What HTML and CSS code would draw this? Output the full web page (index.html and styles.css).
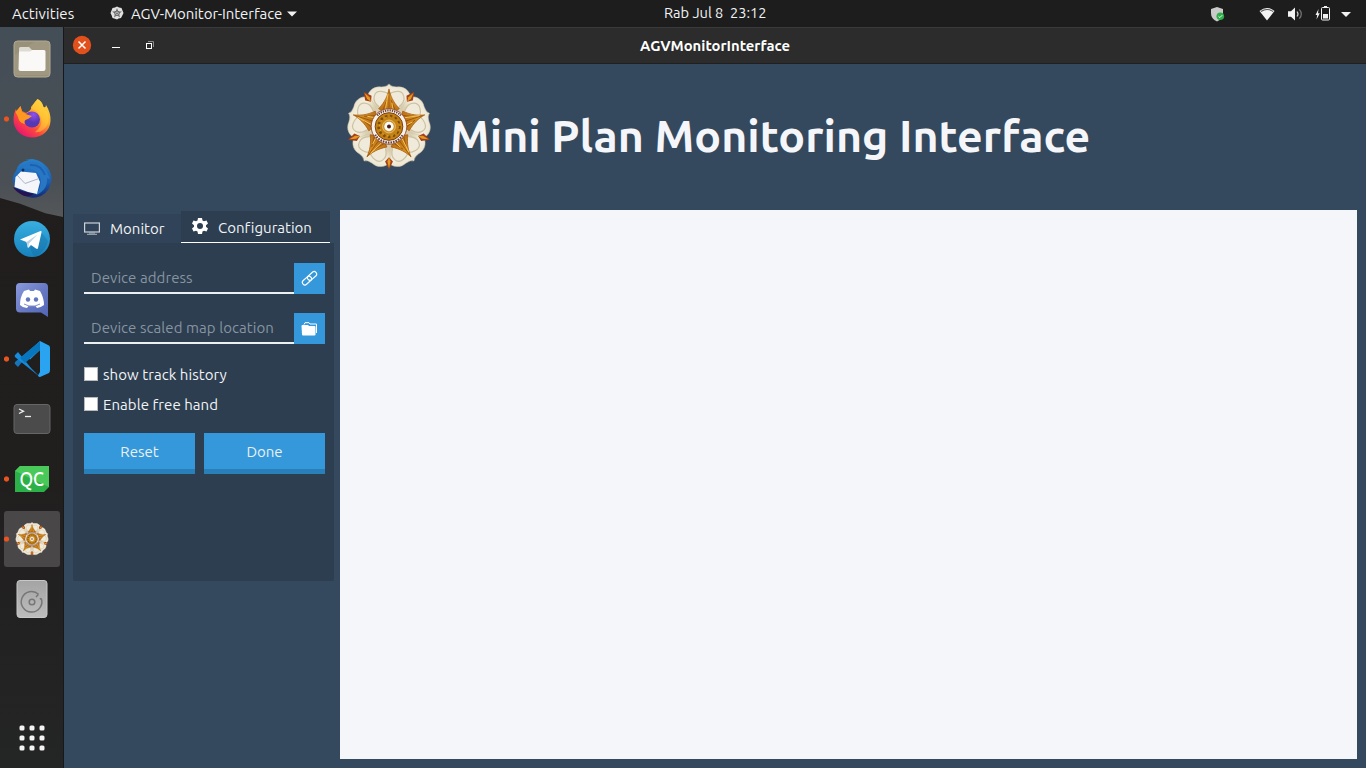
FILE: index.html
```html
<!DOCTYPE html>
<html lang="en">
<head>
<meta charset="utf-8">
<title>AGVMonitorInterface</title>
<link rel="stylesheet" href="styles.css">
</head>
<body>
<svg class="defs" width="0" height="0">
  <defs>
    <linearGradient id="gold" x1="0" y1="0" x2="0" y2="1"><stop offset="0" stop-color="#e8a32a"/><stop offset="1" stop-color="#b0680f"/></linearGradient>
    <radialGradient id="cream" gradientUnits="userSpaceOnUse" cx="0" cy="0" r="43"><stop offset=".55" stop-color="#d9ceb0"/><stop offset=".8" stop-color="#f4efe0"/><stop offset="1" stop-color="#ebe3ce"/></radialGradient>
    <g id="petal">
      <path d="M0 0-22-28C-22-34-17-41-8-40Q-2-40 0-43Q2-40 8-40C17-41 22-34 22-28Z" fill="url(#cream)" stroke="#d0c5a8" stroke-width=".5"/>
      <path d="M-10-20C-19-27-15-36-8-35.500Q-2-35 0-32Q2-35 8-35.500C15-36 19-27 10-20" fill="#f0eada" stroke="#cdc2a2" stroke-width="1.200"/>
    </g>
    <g id="sepal"><path d="M0-43.500-4-35.500 0-31 4-35.500Z" fill="#a3401a"/><path d="M0-42-1.600-35.500 0-31 1.600-35.500Z" fill="#e39a21"/></g>
    <g id="ray">
      <path d="M0-38C-1.500-31-4-25-10.500-18L0-12 10.500-18C4-25 1.500-31 0-38Z" fill="url(#gold)" stroke="#a3560f" stroke-width=".7"/>
      <path d="M0-36V-15M-2-27-6-17M2-27 6-17" stroke="#96500e" stroke-width=".8" fill="none"/>
      <path d="M-1-33-3.500-18M3-24 4-17" stroke="#f5c458" stroke-width=".9"/>
    </g>
  </defs>
  <symbol id="emblem" viewBox="-43.500 -43.500 87 87">
    <use href="#petal"/><use href="#petal" transform="rotate(72)"/><use href="#petal" transform="rotate(144)"/><use href="#petal" transform="rotate(216)"/><use href="#petal" transform="rotate(288)"/>
    <use href="#sepal" transform="rotate(36)"/><use href="#sepal" transform="rotate(108)"/><use href="#sepal" transform="rotate(180)"/><use href="#sepal" transform="rotate(252)"/><use href="#sepal" transform="rotate(324)"/>
    <path d="M0-21 20-6 12.500 17H-12.500L-20-6Z" fill="#c77b17" stroke="#98480f"/>
    <use href="#ray"/><use href="#ray" transform="rotate(72)"/><use href="#ray" transform="rotate(144)"/><use href="#ray" transform="rotate(216)"/><use href="#ray" transform="rotate(288)"/>
    <circle r="18" fill="#f6f1e9" stroke="#8d3c20" stroke-width=".8"/>
    <path d="M-11.900-11.100A16.300 16.300 0 0 1 11.900-11.100" fill="none" stroke="#6d4038" stroke-width="2.200" stroke-dasharray="1.300 1"/>
    <path d="M-14 8.300A16.300 16.300 0 0 0 14 8.300" fill="none" stroke="#6d4038" stroke-width="2.200" stroke-dasharray="1.600 1"/>
    <circle r="14" fill="#c58214" stroke="#7c3d0e"/>
    <circle r="10.500" fill="none" stroke="#7d4c0c" stroke-width="2.600" stroke-dasharray="2.500 2.500"/>
    <circle r="9.500" fill="none" stroke="#e2a62c" stroke-width="1" stroke-dasharray="2 3"/>
    <circle r="6.500" fill="#ca9136" stroke="#e8bd62"/><circle r="4.800" fill="#fffaf0"/><circle r="2" fill="#472022"/>
  </symbol>
</svg>
<div class="screen">
  <header class="topbar">
    <span class="activities">Activities</span>
    <svg class="app-icon" width="14" height="14" viewBox="0 0 14 14"><path d="M7 .5 9 1.500 11.500 2 12.500 4.500 13.500 7 12.300 9.500 11 12 8.500 12.500 7 13.500 5 12.700 2.500 12 1.700 9.500.5 7 1.500 4.500 2.500 2 5 1.500Z" fill="#e0e0e0"/><path d="m7 2 1.300 3.300 3.700.2-2.900 2.300 1 3.700L7 9.500l-3.100 2 1-3.700L2 5.500l3.700-.2Z" fill="#777"/><circle cx="7" cy="7.200" r="2.200" fill="#c7c7c7" stroke="#444" stroke-width=".7"/><circle cx="7" cy="7.200" r=".7" fill="#333"/></svg>
    <span class="app-name">AGV-Monitor-Interface</span>
    <svg class="menu-arrow" width="10" height="6" viewBox="0 0 10 6"><path d="M0 .5H10L5 5.500Z" fill="#f2f2f2"/></svg>
    <span class="clock">Rab Jul 8&nbsp; 23:12</span>
    <svg class="tray" width="166" height="27" viewBox="1200 0 166 27">
      <path d="M1217 6 1223 8V12Q1223 18 1217 20.500Q1211 18 1211 12V8Z" fill="#c9c9c9"/><circle cx="1220.300" cy="15.300" r="3.800" fill="#2fad4b"/><path d="m1218.500 15.300 1.400 1.300 2.300-2.400" fill="none" stroke="#e7fff0"/>
      <path d="M1259.500 10Q1267 4 1274.500 10L1267 19.500Z" fill="#f2f2f2"/><path d="M1261 10.500Q1267 6.500 1273 10.500" fill="none" stroke="#555" stroke-width="1.100"/>
      <path d="M1288 10.300H1291L1295 6.500V19.500L1291 15.700H1288Z" fill="#f2f2f2"/><path d="M1297 10.500Q1299 13 1297 15.500" fill="none" stroke="#ccc" stroke-width="1.200"/><path d="M1299.300 8.300Q1303.300 13 1299.300 17.700" fill="none" stroke="#777" stroke-width="1.200"/>
      <path d="M1318.500 8 1315.500 14H1317.200L1316.500 18.500 1319.800 12.300H1318Z" fill="#f2f2f2"/><path d="M1324 5.500H1327" stroke="#f2f2f2"/><rect x="1321.500" y="6.500" width="8" height="12.500" rx="1" fill="none" stroke="#f2f2f2"/><rect x="1323" y="13" width="5" height="4.500" fill="#f2f2f2"/>
      <path d="M1341 11H1351L1346 16Z" fill="#f2f2f2"/>
    </svg>
  </header>
  <div class="desktop">
    <nav class="dock">
      <svg class="dock-item" viewBox="0 29 64 60"><rect x="14" y="41" width="36" height="36" rx="3.500" fill="#989078" stroke="#b3ab95"/><path d="M15 55 36 41H48Q50 41 50 43V75H15Z" fill="#aaa28c" opacity=".4"/><path d="M19 48.500Q19 47 20.500 47H29L32 50H43V52H19Z" fill="#dedbd3"/><path d="M19 51.500H30L32.500 50H44Q45.500 50 45.500 51.500V69Q45.500 71 43.500 71H20.500Q18.500 71 18.500 69Z" fill="#faf9f7"/></svg>
      <svg class="dock-item running" viewBox="0 89 64 60"><defs><linearGradient id="fx" x1="1" y1="0" x2=".2" y2="1"><stop offset="0" stop-color="#ffe94b"/><stop offset=".4" stop-color="#ffad2c"/><stop offset=".68" stop-color="#fb4b3c"/><stop offset="1" stop-color="#e80d78"/></linearGradient><radialGradient id="vi" cx=".6" cy=".2"><stop offset="0" stop-color="#9350ee"/><stop offset="1" stop-color="#5438b5"/></radialGradient></defs><path d="M37.500 99Q42 101 43.500 107Q46 108 46 105Q51 113 50.500 121C50 131 42 137.500 32 137.500C21 137.500 13 129 13.500 119Q14 112 16 109L17 113 20.500 106 22 111 26 113Q32 110 31 107Q34 103 37.500 99Z" fill="url(#fx)"/><path d="M37.500 99Q42 101 43.500 107L48 113Q51 124 43 130Q39 133 35 132Q43 126 41 118Q39 111 32 109Q32 105 37.500 99Z" fill="#ffd33c" opacity=".5"/><circle cx="32" cy="119.500" r="8" fill="url(#vi)"/><path d="M15.500 112 20.500 106 22 112 27 114.500 32 116 28 119Q23 120 25 124Q19 123 18 117Z" fill="#ff9820"/></svg>
      <svg class="dock-item" viewBox="0 149 64 60"><defs><linearGradient id="tb" x1="0" y1="0" x2="0" y2="1"><stop offset="0" stop-color="#2683cd"/><stop offset=".6" stop-color="#1b5db1"/><stop offset="1" stop-color="#142a70"/></linearGradient></defs><path d="M25 160 32 159C42 160 51 168 51.500 178Q51 191 41 196Q32 200 23 195Q13 190 12.500 179L14 174 16 171Q18 162 29 160Z" fill="url(#tb)"/><path d="M28 162Q42 159 48 174L50 179 47 178Q48 190 36 195Q45 180 37 172Q31 167 22 169" fill="#2877c5"/><path d="M30 165Q41 164 45 175" fill="none" stroke="#1c62b3" stroke-width="2"/><path d="M14.500 187 15.500 177 21 171.500 36 173 40 182 37 194 28 192Z" fill="#f4f6fa"/><path d="m17 175 8 8.500 14-5" fill="none" stroke="#acb4c7"/><path d="M13 187 22 191 34 194Q28 198 22 195Q15 191 13 187Z" fill="#231353"/><circle cx="23" cy="170" r="1.500" fill="#102e63"/></svg>
      <svg class="dock-item" viewBox="0 209 64 60"><defs><linearGradient id="tg" x1="0" y1="0" x2="0" y2="1"><stop offset="0" stop-color="#38aedf"/><stop offset="1" stop-color="#1782be"/></linearGradient></defs><circle cx="32" cy="239" r="18" fill="url(#tg)"/><path d="m30 248 11-16 7 9Q45 253 34 257Z" fill="#14699d" opacity=".35"/><path d="M20 239.500 40.500 231Q42 230.500 41.500 232.500L38 248Q37.500 249.500 36 248.500L31 245 28 248 26.500 242Z" fill="#fff"/><path d="m26.500 242 11-7.500-8.500 9-1 4.500Z" fill="#bed3e2"/></svg>
      <svg class="dock-item" viewBox="0 269 64 60"><defs><linearGradient id="dc" x1="0" y1="0" x2="1" y2="1"><stop offset="0" stop-color="#8b9add"/><stop offset=".5" stop-color="#697ac4"/><stop offset="1" stop-color="#5065b5"/></linearGradient></defs><path d="M20 283H44Q48 283 48 287V317L41 312.500H20Q16 312.500 16 308.500V287Q16 283 20 283Z" fill="url(#dc)"/><path d="M24 291 29 289.500 30 291H34L35 289.500 40 291Q44 298 44 305Q40 308 37 308L35.500 306H28.500L27 308Q23 308 20 305Q20 297 24 291Z" fill="#fff"/><circle cx="28" cy="299.500" r="2.200" fill="#6475bf"/><circle cx="36" cy="299.500" r="2.200" fill="#6475bf"/><path d="m24 304 5 2h6l5-2" fill="none" stroke="#8290cd"/></svg>
      <svg class="dock-item running" viewBox="0 329 64 60"><path d="m40 342-9 9-13 16-3-3Q14 363 15.500 361.500L40 341.500Z" fill="#1674b9"/><path d="m40 377-9-9-13-16-3 3Q14 356 15.500 357.500L40 377Z" fill="#168cda"/><path d="m40 341 9 4.500Q50 346 50 348V370Q50 372 49 373L40 377Q38.500 377 38 375.500L40 372V350L30 359.500 25 355Z" fill="#2aa4f1"/><path d="M25 363 40 350V341L20 358Z" fill="#0876bc"/></svg>
      <svg class="dock-item" viewBox="0 389 64 60"><rect x="14" y="404.500" width="36" height="29" rx="3" fill="#4b4b4b" stroke="#666"/><path d="m19 409 4.500 2.200-4.500 2.300" fill="none" stroke="#eee" stroke-width="1.300"/><path d="M25 416.500H31" stroke="#eee" stroke-width="1.300"/></svg>
      <svg class="dock-item running" viewBox="0 449 64 60"><path d="M20 466H49V487L44 492H15V471Z" fill="#2bb148"/><path d="M20 466H49V487L15 471Z" fill="#4ac95b"/><text x="19.500" y="485.500" textLength="24.500" lengthAdjust="spacingAndGlyphs" class="qc">QC</text></svg>
      <svg class="dock-item" viewBox="0 509 64 60"><rect x="4" y="511" width="56" height="56" rx="3" fill="#494747"/><circle cx="6.500" cy="539" r="2.600" fill="#e95420"/><use href="#emblem" x="15" y="521.500" width="34" height="35"/></svg>
      <svg class="dock-item" viewBox="0 569 64 60"><defs><linearGradient id="dk" x1="0" y1="0" x2="0" y2="1"><stop offset="0" stop-color="#a4a4a4"/><stop offset="1" stop-color="#bdbdbd"/></linearGradient></defs><rect x="17" y="580.500" width="30" height="37" rx="3" fill="url(#dk)" stroke="#c8c8c8"/><path d="M41.300 598.500A10.300 10.300 0 1 1 38.500 594.200M41.300 598.500 39.800 599M38.500 594.200 36 597" fill="none" stroke="#777" stroke-width="1.500"/><circle cx="32" cy="602" r="2.800" fill="none" stroke="#777" stroke-width="1.500"/></svg>
      <svg class="apps" width="28" height="28" viewBox="0 0 28 28" fill="#f3f3f3"><rect x="1.500" y="1.500" width="5" height="5" rx="1.500"/><rect x="11.500" y="1.500" width="5" height="5" rx="1.500"/><rect x="21.500" y="1.500" width="5" height="5" rx="1.500"/><rect x="1.500" y="11.500" width="5" height="5" rx="1.500"/><rect x="11.500" y="11.500" width="5" height="5" rx="1.500"/><rect x="21.500" y="11.500" width="5" height="5" rx="1.500"/><rect x="1.500" y="21.500" width="5" height="5" rx="1.500"/><rect x="11.500" y="21.500" width="5" height="5" rx="1.500"/><rect x="21.500" y="21.500" width="5" height="5" rx="1.500"/></svg>
    </nav>
    <section class="window">
      <div class="titlebar">
        <svg class="controls" width="100" height="36" viewBox="64 28 100 36"><circle cx="82" cy="45" r="9.200" fill="#e2501c"/><path d="m78.500 41.500 7 7m0-7-7 7" stroke="#fff" stroke-width="1.500"/><path d="M112 47.500H120" stroke="#fff"/><rect x="146.500" y="43.500" width="5" height="5" fill="none" stroke="#fff"/><path d="M148 41.500H153.500V47" fill="none" stroke="#8b8b8b"/></svg>
        <span class="window-title">AGVMonitorInterface</span>
      </div>
      <div class="brand">
        <svg class="logo" width="86" height="87"><use href="#emblem" width="86" height="87"/></svg>
        <h1>Mini Plan Monitoring Interface</h1>
      </div>
      <main class="content">
        <aside class="side">
          <div class="tabs">
            <div class="tab tab-monitor"><svg width="16" height="13" viewBox="0 0 16 13"><rect x=".6" y="1" width="14.800" height="9" fill="none" stroke="#cbd3d8" stroke-width="1.200"/><path d="M5 11H11M3 12.300H13" stroke="#aab5bd"/></svg><span>Monitor</span></div>
            <div class="tab tab-config"><svg width="16" height="16" viewBox="0 0 16 16"><path fill-rule="evenodd" d="M6 0H10L10.500 2.500 12 3.300 14.500 2.500 16 5.500 14 7.200V8.800L16 10.500 14.500 13.500 12 12.700 10.500 13.500 10 16H6L5.500 13.500 4 12.700 1.500 13.500 0 10.500 2 8.800V7.200L0 5.500 1.500 2.500 4 3.300 5.500 2.500ZM8 5A3 3 0 1 0 8 11A3 3 0 1 0 8 5Z" fill="#fff"/></svg><span>Configuration</span></div>
          </div>
          <div class="panel">
            <div class="field"><span class="placeholder address">Device address</span><span class="field-button"><svg width="17" height="17" viewBox="0 0 17 17" fill="none" stroke="#fff" stroke-width="1.150"><rect x="5.800" y="3.500" width="10.500" height="5" rx="2.500" transform="rotate(-42 11 6)"/><rect x=".7" y="8" width="10.500" height="5" rx="2.500" transform="rotate(-42 6 10.500)"/></svg></span></div>
            <div class="field"><span class="placeholder map">Device scaled map location</span><span class="field-button"><svg width="17" height="14" viewBox="0 0 17 14"><path d="M3 2.500 4 .7H8L9 2H15.500V11" fill="none" stroke="#fff"/><path d="M.5 4Q.5 3 1.500 3H7L8 4H13.500Q14.500 4 14.500 5V12.500Q14.500 13.500 13.500 13.500H2Q1 13.500 1 12.500Z" fill="#fff"/></svg></span></div>
            <label class="check"><i class="box"></i><span class="track">show track history</span></label>
            <label class="check"><i class="box"></i><span class="hand">Enable free hand</span></label>
            <div class="actions"><button class="reset">Reset</button><button class="done">Done</button></div>
          </div>
        </aside>
        <div class="canvas"></div>
      </main>
    </section>
  </div>
</div>
</body>
</html>
```
FILE: styles.css
```css
* { box-sizing: border-box; }
body { margin: 0; overflow: hidden; font: 15px/20px Ubuntu, "Noto Sans", sans-serif; color: #f1f3f5; }
svg { display: block; flex: none; }
span { white-space: nowrap; }
.defs { position: absolute; }
.screen { width: 1366px; height: 768px; display: flex; flex-direction: column; }
.topbar { height: 27px; display: grid; grid-template-columns: 98px 21px 156px 389px 536px 166px; align-items: center; background: #1d1d1d; font-size: 15px; line-height: 26px; flex: none; }
.activities { padding-left: 12px; letter-spacing: .08px; }
.app-icon { margin: 0 0 2px 12px; }
.app-name { padding-left: 12px; letter-spacing: -.06px; }
.menu-arrow { margin-left: 12px; }
.clock { font-size: 14.6px; padding-bottom: 2px; }
.desktop { flex: 1; display: flex; min-height: 0; }
.dock { position: relative; width: 64px; flex: none; padding-top: 2px; display: flex; flex-direction: column; border-right: 1px solid #171819; background: linear-gradient(#211d1d, #211e1e 60%, #242525); }
.dock::before { content: ""; position: absolute; inset: 0 0 auto; height: 190px; background: linear-gradient(#444e57, #494f55 80%, #555759); clip-path: polygon(0 0, 100% 0, 100% 100%, 72% 98%, 32% 93%, 0 90%); }
.dock-item { position: relative; width: 64px; height: 60px; }
.running { background: radial-gradient(circle at 6.500px 30px, #e95420 2.200px, transparent 3px); }
.apps { margin: 95px 0 0 18px; }
.qc { font: 500 20px Ubuntu, "Noto Sans", sans-serif; fill: #fff; }
.window { flex: 1; display: flex; flex-direction: column; background: #34495e; min-width: 0; }
.titlebar { height: 37px; flex: none; display: grid; grid-template-columns: 1fr auto 1fr; align-items: start; background: #2c2c2c; border-top: 1px solid #3a3a3a; border-bottom: 1px solid #202020; }
.window-title { font-size: 14.800px; line-height: 36px; font-weight: 700; color: #fff; }
.brand { height: 145px; flex: none; display: flex; padding: 19px 0 0 282px; }
h1 { margin: 22px 0 0 18px; font-size: 44.660px; line-height: 60px; font-weight: 700; color: #f5f6fa; white-space: nowrap; }
.content { flex: 1; display: flex; gap: 6px; padding: 1px 9px 9px; min-height: 0; }
.side { width: 261px; flex: none; }
.tabs { display: flex; align-items: flex-end; height: 33px; }
.tab { display: flex; align-items: center; }
.tab-monitor { width: 108px; height: 29px; padding-left: 11px; gap: 10px; background: #314358; }
.tab-config { width: 149px; height: 32px; padding: 0 0 1px 11px; gap: 10px; background: #2c3e50; border-bottom: 1px solid #fff; }
.tab-config svg { margin-bottom: 1px; }
.tab-config span { padding-top: 3px; font-variant-ligatures: none; }
.panel { height: 338px; padding: 20px 9px 0 11px; background: #2c3e50; border-radius: 0 0 2px 2px; }
.field { display: flex; height: 31px; margin-bottom: 19px; }
.placeholder { flex: 1; border-bottom: 2px solid #ecf0f1; padding-left: 7px; line-height: 29px; letter-spacing: .07px; color: #8894a0; }
.field-button { width: 31px; display: grid; place-items: center; background: #3498db; }
.check { display: flex; align-items: center; gap: 5px; height: 20px; margin: 0 0 10px; letter-spacing: .06px; }
.panel .check:first-of-type { margin-top: 21px; }
.box { width: 14px; height: 14px; margin-bottom: 2px; background: #fff; border: 1px solid #b8b9b8; }
.actions { display: flex; gap: 9px; margin-top: 18px; }
button { width: 121px; height: 41px; padding: 2px 0 0; border: 0; border-bottom: 5px solid #2980b9; background: #3498db; color: #ecf0f1; font: 15px/20px Ubuntu, "Noto Sans", sans-serif; }
.reset { width: 111px; }
.canvas { flex: 1; background: #f5f6fa; }
```
